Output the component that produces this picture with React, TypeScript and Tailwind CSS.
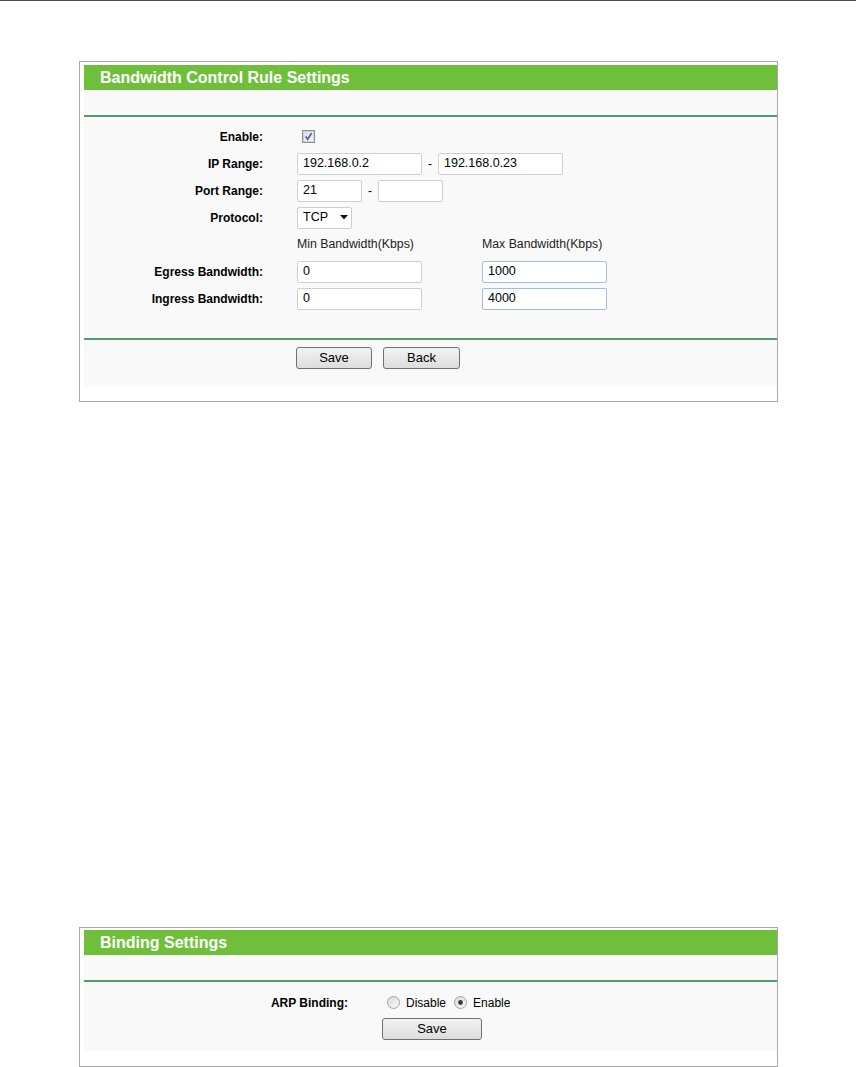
import React from "react";

function CheckBox() {
  return (
    <svg width="13" height="13" viewBox="0 0 13 13" className="ml-[5px] block">
      <defs>
        <linearGradient id="cbg" x1="0" y1="0" x2="1" y2="1">
          <stop offset="0" stopColor="#dcdcdc" />
          <stop offset="1" stopColor="#f8f8f8" />
        </linearGradient>
      </defs>
      <rect x="0.5" y="0.5" width="12" height="12" fill="#fff" stroke="#8f8f8f" />
      <rect x="1.5" y="1.5" width="10" height="10" fill="url(#cbg)" stroke="#d0d0d0" />
      <path d="M3.6 6.6 L5.6 9.3 L9.6 3.2" fill="none" stroke="#4a5aa8" strokeWidth="1.6" />
    </svg>
  );
}

function Radio({ checked }: { checked?: boolean }) {
  return (
    <svg width="13" height="13" viewBox="0 0 13 13" className="block">
      <defs>
        <linearGradient id={checked ? "rg1" : "rg0"} x1="0" y1="0" x2="1" y2="1">
          <stop offset="0" stopColor="#d8d8d8" />
          <stop offset="1" stopColor="#fafafa" />
        </linearGradient>
      </defs>
      <circle cx="6.5" cy="6.5" r="6" fill={`url(#${checked ? "rg1" : "rg0"})`} stroke="#a3a3a3" />
      {checked && <circle cx="6.5" cy="6.5" r="2.4" fill="#3a3a3a" />}
    </svg>
  );
}

function TextBox({ w, value, blue }: { w: string; value?: string; blue?: boolean }) {
  return (
    <div
      className={`${w} h-[22px] bg-white border rounded-[2px] flex items-center pl-[5px] text-[12.5px] text-black ${
        blue ? "border-[#9ec0de]" : "border-[#cfcfcf]"
      }`}
    >
      {value}
    </div>
  );
}

function Row({ label, children }: { label?: string; children?: React.ReactNode }) {
  return (
    <div className="h-[27px] flex items-center">
      <div className="w-[179px] text-right font-bold">{label}</div>
      <div className="ml-[34px] flex items-center">{children}</div>
    </div>
  );
}

function Btn({ w, children }: { w: string; children: React.ReactNode }) {
  return (
    <div
      className={`${w} h-[22px] border border-[#707070] rounded-[3px] bg-gradient-to-b from-[#f3f3f3] to-[#dddddd] flex items-center justify-center text-[13px] text-black`}
    >
      {children}
    </div>
  );
}

function Header({ title }: { title: string }) {
  return (
    <>
      <div className="h-[25px] bg-[#70bf3b] pl-4 text-[16px] font-bold text-white leading-[25px]">{title}</div>
      <div className="h-[25px]" />
      <div className="h-[2px] bg-[#4f9b6e]" />
    </>
  );
}

export default function App() {
  return (
    <div className="min-h-[1067px] bg-white border-t border-[#4b4b4b] font-['Liberation_Sans',Arial,sans-serif] text-[12px] text-black">
      <div className="ml-[79px] mt-[60px] w-[699px] border border-[#a9a9a9] pt-[3px] pl-[4px] pb-[15px]">
        <div className="bg-[#f9f9f9]">
          <Header title="Bandwidth Control Rule Settings" />
          <div className="pt-[6px]">
            <Row label="Enable:">
              <CheckBox />
            </Row>
            <Row label="IP Range:">
              <TextBox w="w-[125px]" value="192.168.0.2" />
              <span className="mx-[6px]">-</span>
              <TextBox w="w-[125px]" value="192.168.0.23" />
            </Row>
            <Row label="Port Range:">
              <TextBox w="w-[65px]" value="21" />
              <span className="mx-[6px]">-</span>
              <TextBox w="w-[65px]" />
            </Row>
            <Row label="Protocol:">
              <div className="w-[55px] h-[22px] bg-white border border-[#cfcfcf] rounded-[2px] flex items-center pl-[5px] text-[12.5px]">
                <span>TCP</span>
                <svg width="8" height="5" viewBox="0 0 8 5" className="ml-[12px]">
                  <path d="M0 0 H8 L4 4.5 Z" fill="#111" />
                </svg>
              </div>
            </Row>
            <Row>
              <div className="w-[185px] text-[12.3px] text-[#222]">Min Bandwidth(Kbps)</div>
              <div className="text-[12.3px] text-[#222]">Max Bandwidth(Kbps)</div>
            </Row>
            <Row label="Egress Bandwidth:">
              <div className="w-[185px]">
                <TextBox w="w-[125px]" value="0" />
              </div>
              <TextBox w="w-[125px]" value="1000" blue />
            </Row>
            <Row label="Ingress Bandwidth:">
              <div className="w-[185px]">
                <TextBox w="w-[125px]" value="0" />
              </div>
              <TextBox w="w-[125px]" value="4000" blue />
            </Row>
          </div>
          <div className="h-[2px] bg-[#4f9b6e] mt-[26px]" />
          <div className="pt-[7px] pb-[17px] flex gap-[11px] pl-[212px]">
            <Btn w="w-[76px]">Save</Btn>
            <Btn w="w-[77px]">Back</Btn>
          </div>
        </div>
      </div>

      <div className="ml-[79px] mt-[525px] w-[699px] border border-[#a9a9a9] pt-[2px] pl-[4px] pb-[15px]">
        <div className="bg-[#f9f9f9]">
          <Header title="Binding Settings" />
          <div className="pt-[7px]">
            <div className="h-[27px] flex items-center">
              <div className="w-[264px] text-right font-bold">ARP Binding:</div>
              <div className="ml-[39px] flex items-center">
                <Radio />
                <span className="ml-[6px] mr-[8px]">Disable</span>
                <Radio checked />
                <span className="ml-[6px]">Enable</span>
              </div>
            </div>
            <div className="pl-[298px] pt-[2px] pb-[11px]">
              <Btn w="w-[100px]">Save</Btn>
            </div>
          </div>
        </div>
      </div>
    </div>
  );
}
